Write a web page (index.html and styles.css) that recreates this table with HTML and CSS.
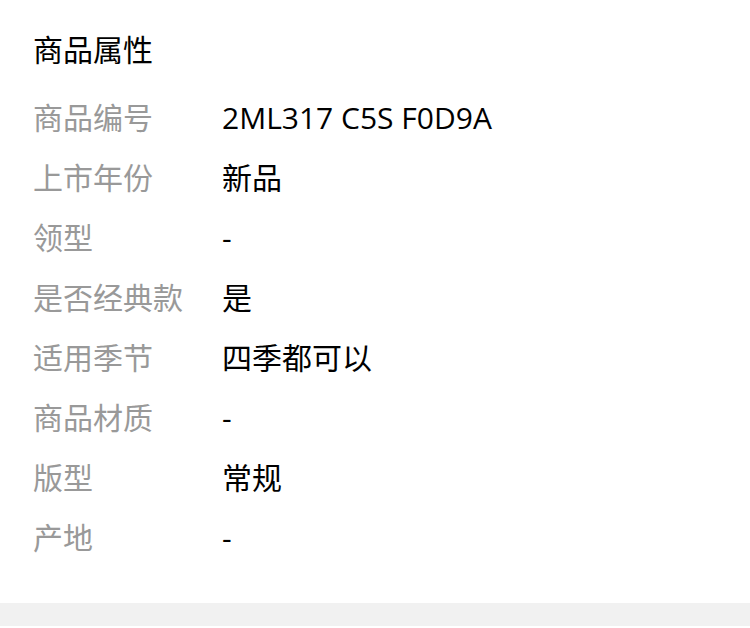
FILE: index.html
```html
<!DOCTYPE html>
<html lang="zh-CN">
<head>
<meta charset="utf-8">
<link rel="stylesheet" href="styles.css">
</head>
<body>
<div class="panel">
  <div class="title">商品属性</div>
  <div class="rows">
    <div class="row"><span class="label">商品编号</span><span class="value">2ML317 C5S F0D9A</span></div>
    <div class="row"><span class="label">上市年份</span><span class="value">新品</span></div>
    <div class="row"><span class="label">领型</span><span class="value">-</span></div>
    <div class="row"><span class="label">是否经典款</span><span class="value">是</span></div>
    <div class="row"><span class="label">适用季节</span><span class="value">四季都可以</span></div>
    <div class="row"><span class="label">商品材质</span><span class="value">-</span></div>
    <div class="row"><span class="label">版型</span><span class="value">常规</span></div>
    <div class="row"><span class="label">产地</span><span class="value">-</span></div>
  </div>
</div>
<div class="divider"></div>
</body>
</html>
```
FILE: styles.css
```css
html, body {
  margin: 0;
  padding: 0;
  background: #fff;
}
body {
  width: 750px;
  height: 628px;
  overflow: hidden;
  font-family: "Open Sans", "Noto Sans CJK SC", sans-serif;
}
.panel {
  padding: 20px 0 35px 33px;
}
.title {
  height: 60px;
  line-height: 60px;
  font-size: 30px;
  color: #000;
}
.rows {
  margin-top: 8px;
  display: flex;
  flex-direction: column;
}
.row {
  display: flex;
  height: 60px;
  align-items: center;
  font-size: 30px;
  line-height: 40px;
}
.label {
  width: 189px;
  color: #999;
}
.value {
  color: #000;
}
.divider {
  height: 23px;
  background: #f1f1f1;
}
```
